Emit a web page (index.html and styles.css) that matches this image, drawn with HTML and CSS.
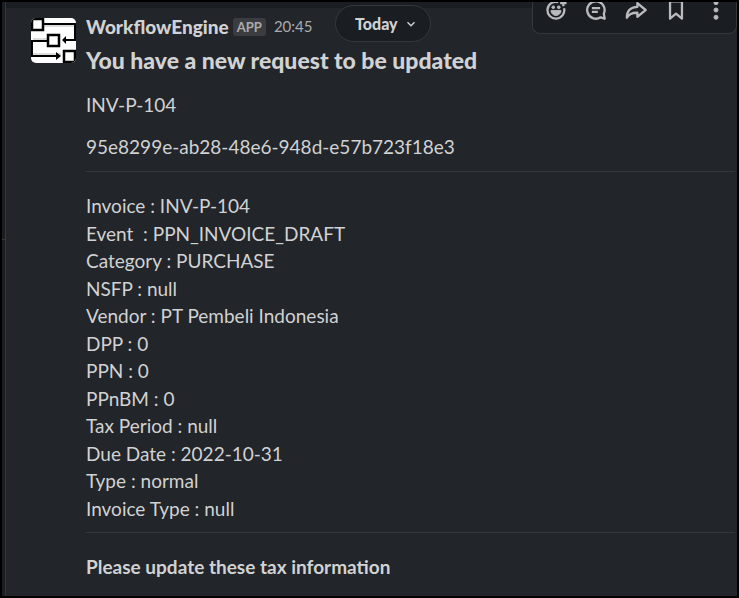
FILE: index.html
```
<!DOCTYPE html>
<html lang="en">
<head>
    <meta charset="utf-8">
    <title>WorkflowEngine</title>
    <link rel="stylesheet" href="styles.css">
</head>
<body>
    <div class="window">
        <div class="rail"></div>
        <main class="channel">
            <button class="day-button" type="button">
                Today
                <svg width="10" height="10" viewBox="0 0 10 10"><path d="M1.500 3.200l3.500 3.500 3.500-3.500"/></svg>
            </button>

            <div class="actions">
                <button type="button" aria-label="Add reaction">
                    <svg viewBox="0 0 24 24">
                        <path d="M14.5 3.4A9.2 9.2 0 1 0 20.8 10"/>
                        <path d="M20 1v7M16.5 4.5h7"/>
                        <path class="solid" d="M6.5 12.5h11a5.500 5.500 0 0 1-11 0z"/>
                        <circle class="solid" cx="9" cy="9" r="1.5"/>
                        <circle class="solid" cx="15" cy="9" r="1.5"/>
                    </svg>
                </button>
                <button type="button" aria-label="Reply in thread">
                    <svg viewBox="0 0 24 24">
                        <path d="M12 2.5a9.5 9.5 0 1 0 5 17.500l4.500 1.500-1-5.500A9.500 9.500 0 0 0 12 2.500z"/>
                        <path d="M7.5 10h9M7.5 14h6.500"/>
                    </svg>
                </button>
                <button type="button" aria-label="Share message">
                    <svg viewBox="0 0 24 24">
                        <path d="M13.5 4.500l9 7.500-9 7.500v-4.500C8 14.800 4.500 16 2 20.500c0-7 4-11.500 11.500-11.800z"/>
                    </svg>
                </button>
                <button type="button" aria-label="Save">
                    <svg viewBox="0 0 24 24">
                        <path d="M5.500 2.500h13V21.500L12 16 5.500 21.500z"/>
                    </svg>
                </button>
                <button type="button" aria-label="More actions">
                    <svg viewBox="0 0 24 24">
                        <circle class="solid" cx="12" cy="4" r="2.200"/>
                        <circle class="solid" cx="12" cy="12" r="2.200"/>
                        <circle class="solid" cx="12" cy="20" r="2.200"/>
                    </svg>
                </button>
            </div>

            <article class="message">
                <svg class="avatar" viewBox="0 0 45 45">
                    <rect width="45" height="45" fill="#fff"/>
                    <g class="shade">
                        <path d="M13 8h30M2 21h14M2 36h28"/>
                    </g>
                    <g class="wire">
                        <path d="M12 6h32v16h-9M16 23H1v15h26"/>
                    </g>
                    <path d="M31 22l4-4v8zM30 38l-5-4v8z"/>
                    <g class="node">
                        <rect x="1" y="1" width="11" height="11"/>
                        <rect x="17" y="17" width="11" height="11"/>
                        <rect x="33" y="33" width="11" height="11"/>
                    </g>
                </svg>

                <div class="body">
                    <header class="sender">
                        <span class="name">WorkflowEngine</span>
                        <span class="badge">APP</span>
                        <time class="time">20:45</time>
                    </header>
                    <h1 class="title">You have a new request to be updated</h1>
                    <p>INV-P-104</p>
                    <p>95e8299e-ab28-48e6-948d-e57b723f18e3</p>
                    <hr>
                    <div class="fields">
                        <div>Invoice : INV-P-104</div>
                        <div>Event &nbsp;: PPN_INVOICE_DRAFT</div>
                        <div>Category : PURCHASE</div>
                        <div>NSFP : null</div>
                        <div>Vendor : PT Pembeli Indonesia</div>
                        <div>DPP : 0</div>
                        <div>PPN : 0</div>
                        <div>PPnBM : 0</div>
                        <div>Tax Period : null</div>
                        <div>Due Date : 2022-10-31</div>
                        <div>Type : normal</div>
                        <div>Invoice Type : null</div>
                    </div>
                    <hr>
                    <p class="footer">Please update these tax information</p>
                </div>
            </article>
        </main>
    </div>
</body>
</html>
```
FILE: styles.css
```
* {
    box-sizing: border-box;
}

body {
    margin: 0;
    background: #222529;
    color: #d1d2d3;
    font-family: Lato, sans-serif;
    font-size: 19px;
    line-height: 27px;
}

.window {
    display: flex;
    min-height: 100vh;
    border: 2px solid #000;
}

.rail {
    width: 4px;
    border-right: 1px solid #35373b;
    background: linear-gradient(#35373b, #35373b) 0 237px / 100% 1px no-repeat #1a1d21;
}

.channel {
    position: relative;
    flex: 1;
    border-top: 6px solid #1a1d21;
}

/* floats over the message list */
.day-button {
    position: absolute;
    top: -3px;
    left: 329px;
    display: flex;
    align-items: center;
    gap: 8px;
    height: 37px;
    padding: 0 14px 0 19px;
    border: 1px solid #35373b;
    border-radius: 19px;
    background: #1a1d21;
    color: #d1d2d3;
    font: 900 16px Lato, sans-serif;
}

.day-button svg {
    fill: none;
    stroke: #d1d2d3;
    stroke-width: 1.4;
}

.actions {
    position: absolute;
    top: -6px;
    right: 0;
    display: flex;
    gap: 18px;
    width: 205px;
    height: 32px;
    padding: 0 0 0 12px;
    border: 1px solid #35373b;
    border-top: 0;
    border-radius: 0 0 8px 8px;
    background: #1a1d21;
    overflow: hidden;
}

.actions button {
    flex: none;
    width: 22px;
    height: 22px;
    margin-top: -3px;
    padding: 0;
    border: 0;
    background: none;
}

.actions svg {
    display: block;
    width: 22px;
    height: 22px;
    fill: none;
    stroke: #b9babd;
    stroke-width: 2.5;
    stroke-linejoin: round;
}

.actions .solid {
    fill: #b9babd;
    stroke-width: 1;
}

.message {
    display: flex;
    gap: 10px;
    padding: 5px 2px 12px 25px;
}

.avatar {
    flex: none;
    width: 45px;
    height: 45px;
    margin-top: 5px;
    border-radius: 5px;
}

.wire {
    fill: none;
    stroke: #000;
    stroke-width: 2;
}

.shade {
    fill: none;
    stroke: #bbb;
    stroke-width: 1;
}

.node {
    fill: #fff;
    stroke: #000;
    stroke-width: 2.5;
}

.body {
    flex: 1;
}

.sender {
    display: flex;
    align-items: center;
}

.name {
    font-weight: 900;
}

.badge {
    margin-left: 4px;
    padding: 0 4px;
    border-radius: 3px;
    background: #3a3c40;
    color: #ababad;
    font-size: 13px;
    font-weight: bold;
    line-height: 18px;
}

.time {
    margin-left: 8px;
    color: #ababad;
    font-size: 15px;
}

.title {
    margin: 5px 0 16px;
    font-size: 23px;
    font-weight: 900;
    line-height: 30px;
}

p {
    margin: 0 0 15px;
}

hr {
    height: 1px;
    margin: 0;
    border: 0;
    background: #35373b;
}

.body p + hr {
    margin-top: -4px;
}

/* twelve rows spread evenly over the block */
.fields {
    display: grid;
    align-content: space-between;
    min-height: 330px;
    margin: 20px 0 10px;
}

.footer {
    margin: 20px 0 0;
    font-weight: bold;
}
```
